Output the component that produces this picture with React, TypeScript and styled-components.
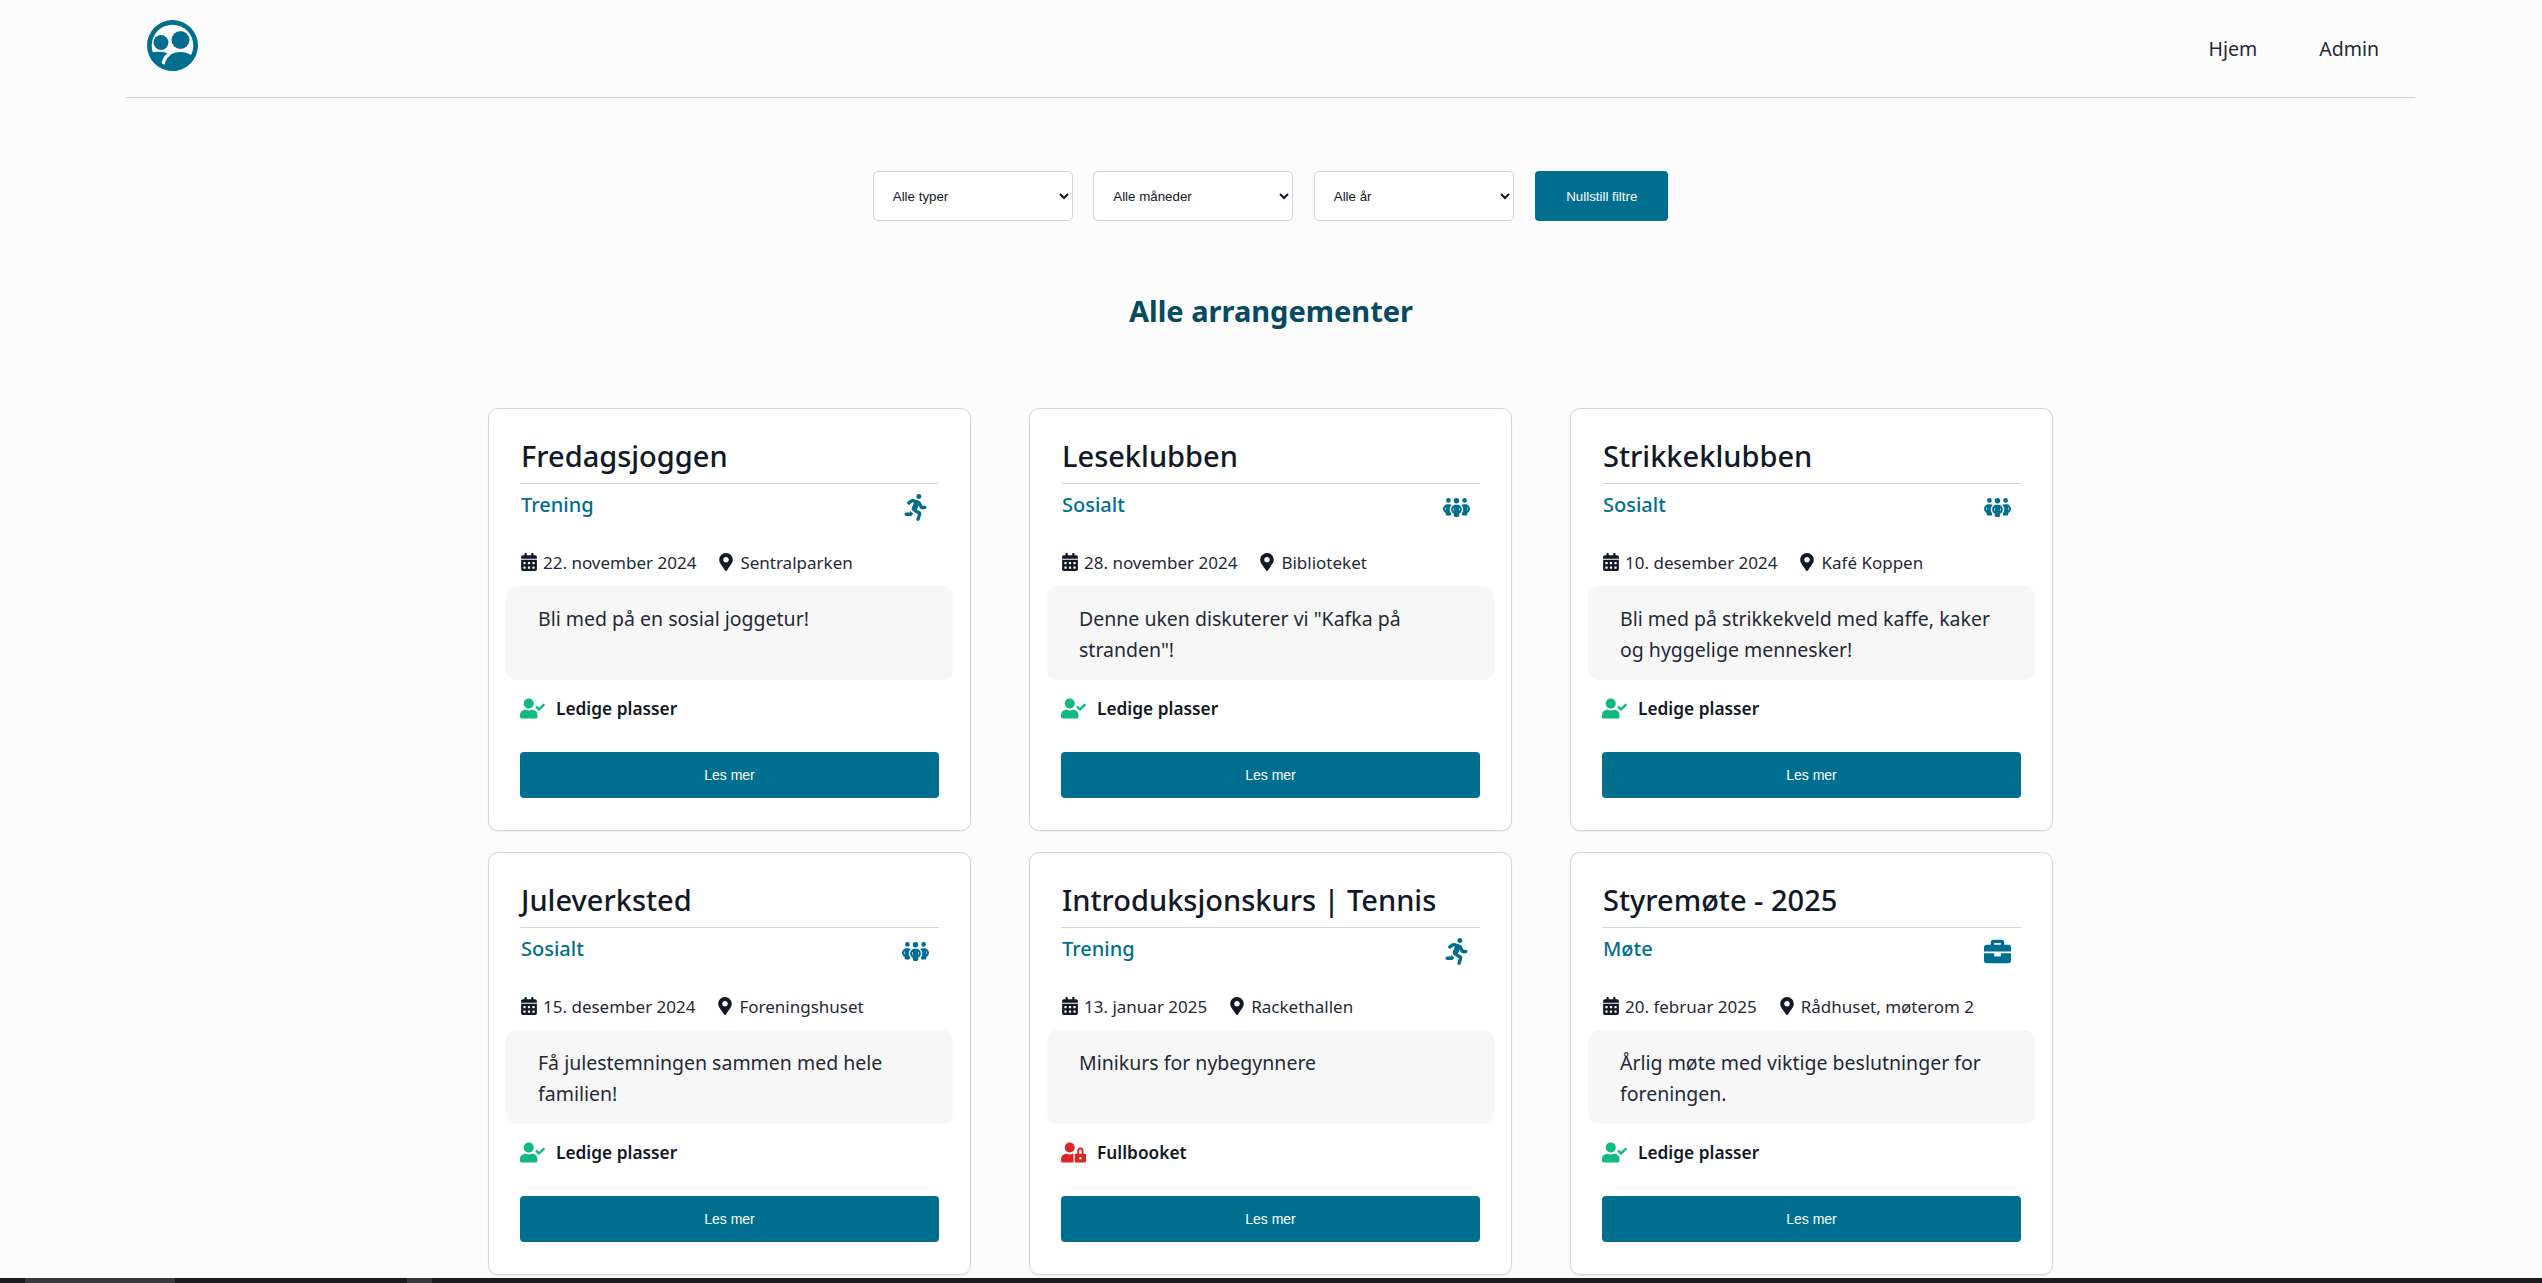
import React from "react";
import styled, { createGlobalStyle } from "styled-components";
import {
  FaBriefcase,
  FaCalendarAlt,
  FaMapMarkerAlt,
  FaRunning,
  FaUserCheck,
  FaUserLock,
} from "react-icons/fa";
import { FaPeopleGroup } from "react-icons/fa6";

const Global = createGlobalStyle`
  html, body { margin: 0; padding: 0; height: 100%; }
  body { background: #fcfcfd; color: #111827; font-family: "Noto Sans", sans-serif; }
`;

type EventItem = {
  title: string;
  type: "Trening" | "Sosialt" | "Møte";
  date: string;
  place: string;
  text: string;
  full?: boolean;
};

const events: EventItem[] = [
  { title: "Fredagsjoggen", type: "Trening", date: "22. november 2024", place: "Sentralparken", text: "Bli med på en sosial joggetur!" },
  { title: "Leseklubben", type: "Sosialt", date: "28. november 2024", place: "Biblioteket", text: 'Denne uken diskuterer vi "Kafka på stranden"!' },
  { title: "Strikkeklubben", type: "Sosialt", date: "10. desember 2024", place: "Kafé Koppen", text: "Bli med på strikkekveld med kaffe, kaker og hyggelige mennesker!" },
  { title: "Juleverksted", type: "Sosialt", date: "15. desember 2024", place: "Foreningshuset", text: "Få julestemningen sammen med hele familien!" },
  { title: "Introduksjonskurs | Tennis", type: "Trening", date: "13. januar 2025", place: "Rackethallen", text: "Minikurs for nybegynnere", full: true },
  { title: "Styremøte - 2025", type: "Møte", date: "20. februar 2025", place: "Rådhuset, møterom 2", text: "Årlig møte med viktige beslutninger for foreningen." },
];

function TypeIcon({ type }: { type: EventItem["type"] }) {
  if (type === "Trening") return <FaRunning size={27} />;
  if (type === "Møte") return <FaBriefcase size={27} />;
  return <FaPeopleGroup size={27} />;
}

function Logo() {
  return (
    <svg width="51" height="51" viewBox="0 0 51 51">
      <circle cx="25.5" cy="25.5" r="25.5" fill="#006f8f" />
      <circle cx="25.5" cy="25.5" r="20.8" fill="#fff" />
      <circle cx="14" cy="22.5" r="7.5" fill="#006f8f" />
      <circle cx="33.5" cy="20" r="9" fill="#006f8f" />
      <path d="M4.5 32.5 C9 31.5 15 31.5 20.5 33 C17 36 15 39.5 14.5 44 C9 41 6 37 4.5 32.5 Z" fill="#006f8f" />
      <path d="M17 47 C18.5 38 24 32 33 32 C39 32 43.5 34 46.5 37 C42.5 45.5 34.5 51 25.5 51 C22 51 19.5 49.5 17 47 Z" fill="#006f8f" />
    </svg>
  );
}

export default function App() {
  return (
    <Page>
      <Global />
      <Main>
        <Header>
          <Logo />
          <Nav>
            <NavLink>Hjem</NavLink>
            <NavLink>Admin</NavLink>
          </Nav>
        </Header>
        <Filters>
          <Select defaultValue="Alle typer">
            <option>Alle typer</option>
          </Select>
          <Select defaultValue="Alle måneder">
            <option>Alle måneder</option>
          </Select>
          <Select defaultValue="Alle år">
            <option>Alle år</option>
          </Select>
          <ResetButton>Nullstill filtre</ResetButton>
        </Filters>
        <Heading>Alle arrangementer</Heading>
        <Grid>
          {events.map((e) => (
            <Card key={e.title}>
              <CardTitle>{e.title}</CardTitle>
              <TypeRow>
                <TypeName>{e.type}</TypeName>
                <TypeGlyph>
                  <TypeIcon type={e.type} />
                </TypeGlyph>
              </TypeRow>
              <Meta>
                <MetaItem>
                  <FaCalendarAlt size={18} />
                  {e.date}
                </MetaItem>
                <MetaItem>
                  <FaMapMarkerAlt size={18} />
                  {e.place}
                </MetaItem>
              </Meta>
              <Description>{e.text}</Description>
              <Status $full={e.full}>
                {e.full ? <FaUserLock size={25} /> : <FaUserCheck size={25} />}
                <span>{e.full ? "Fullbooket" : "Ledige plasser"}</span>
              </Status>
              <ReadMore>Les mer</ReadMore>
            </Card>
          ))}
        </Grid>
      </Main>
      <TaskBar>
        <TaskItem $width={150} $left={25} />
        <TaskItem $width={25} $left={232} />
      </TaskBar>
    </Page>
  );
}

const Page = styled.div`
  height: 100vh;
  display: flex;
  flex-direction: column;
  overflow: hidden;
`;
const Main = styled.main`
  flex: 1;
  min-height: 0;
  overflow: hidden;
`;
const Header = styled.header`
  margin: 0 127px 0 126px;
  height: 98px;
  box-sizing: border-box;
  padding: 20px 36px 0 21px;
  border-bottom: 1px solid #d4d4d8;
  display: flex;
  justify-content: space-between;
  align-items: flex-start;
`;
const Nav = styled.nav`
  display: flex;
  gap: 62px;
  padding-top: 15px;
`;
const NavLink = styled.a`
  font-size: 19.5px;
  line-height: 27px;
  color: #1f2937;
`;
const Filters = styled.div`
  display: flex;
  justify-content: center;
  gap: 20.5px;
  margin-top: 73px;
  padding-right: 1px;
`;
const Select = styled.select`
  width: 200px;
  height: 50px;
  box-sizing: border-box;
  padding: 0 0 0 15px;
  background: #fff;
  border: 1px solid #d4d4dc;
  border-radius: 5px;
  color: #111827;
  font: 13.33px "Liberation Sans", Arial, sans-serif;
`;
const ResetButton = styled.button`
  width: 133px;
  height: 50px;
  margin-left: 1px;
  background: #006f8f;
  border: 0;
  border-radius: 4px;
  color: #fff;
  font: 13.33px "Liberation Sans", Arial, sans-serif;
`;
const Heading = styled.h1`
  margin: 68px 0 0;
  text-align: center;
  font-size: 29px;
  line-height: 44px;
  font-weight: 700;
  color: #064a63;
`;
const Grid = styled.div`
  display: grid;
  grid-template-columns: repeat(3, 483px);
  column-gap: 58px;
  row-gap: 21px;
  justify-content: center;
  margin-top: 75px;
  padding-right: 1px;
`;
const Card = styled.article`
  height: 423px;
  box-sizing: border-box;
  padding: 24px 31px 0;
  background: #fff;
  border: 1px solid #d4d4dc;
  border-radius: 10px;
  box-shadow: 0 1px 2px rgba(0, 0, 0, 0.06);
`;
const CardTitle = styled.h2`
  margin: 0;
  height: 51px;
  box-sizing: border-box;
  padding: 2px 0 0 1px;
  border-bottom: 1px solid #d4d4dc;
  font-size: 29px;
  line-height: 42px;
  font-weight: 500;
  color: #111827;
  white-space: nowrap;
`;
const TypeRow = styled.div`
  display: flex;
  justify-content: space-between;
  height: 42px;
  padding-top: 6px;
`;
const TypeName = styled.span`
  padding-left: 1px;
  font-size: 20px;
  line-height: 30px;
  font-weight: 500;
  color: #006f8f;
`;
const TypeGlyph = styled.span`
  width: 32px;
  margin-right: 8px;
  display: flex;
  justify-content: center;
  padding-top: 4px;
  color: #006f8f;
`;
const Meta = styled.div`
  display: flex;
  gap: 21px;
  height: 30px;
  margin-top: 15px;
  align-items: center;
`;
const MetaItem = styled.span`
  display: flex;
  align-items: center;
  gap: 5px;
  font-size: 17px;
  white-space: nowrap;
  color: #1f2937;
  svg {
    color: #111827;
  }
`;
const Description = styled.p`
  margin: 9px -14px 0;
  height: 94px;
  box-sizing: border-box;
  padding: 17px 31px 0 32px;
  background: #f7f7f7;
  border-radius: 10px;
  font-size: 19.5px;
  line-height: 31px;
  color: #1f2937;
`;
const Status = styled.div<{ $full?: boolean }>`
  display: flex;
  align-items: center;
  gap: 11px;
  height: 56px;
  font-size: 17.3px;
  font-weight: 600;
  svg {
    color: ${(p) => (p.$full ? "#dc2626" : "#10b981")};
  }
`;
const ReadMore = styled.button`
  display: block;
  width: 100%;
  height: 46px;
  margin-top: 16px;
  background: #006f8f;
  border: 0;
  border-radius: 4px;
  color: #fff;
  font: 14px "Liberation Sans", Arial, sans-serif;
`;
const TaskBar = styled.div`
  flex: none;
  height: 5px;
  background: #1c1c20;
  display: flex;
`;
const TaskItem = styled.div<{ $width: number; $left: number }>`
  width: ${(p) => p.$width}px;
  margin-left: ${(p) => p.$left}px;
  background: #3a3a3e;
`;
